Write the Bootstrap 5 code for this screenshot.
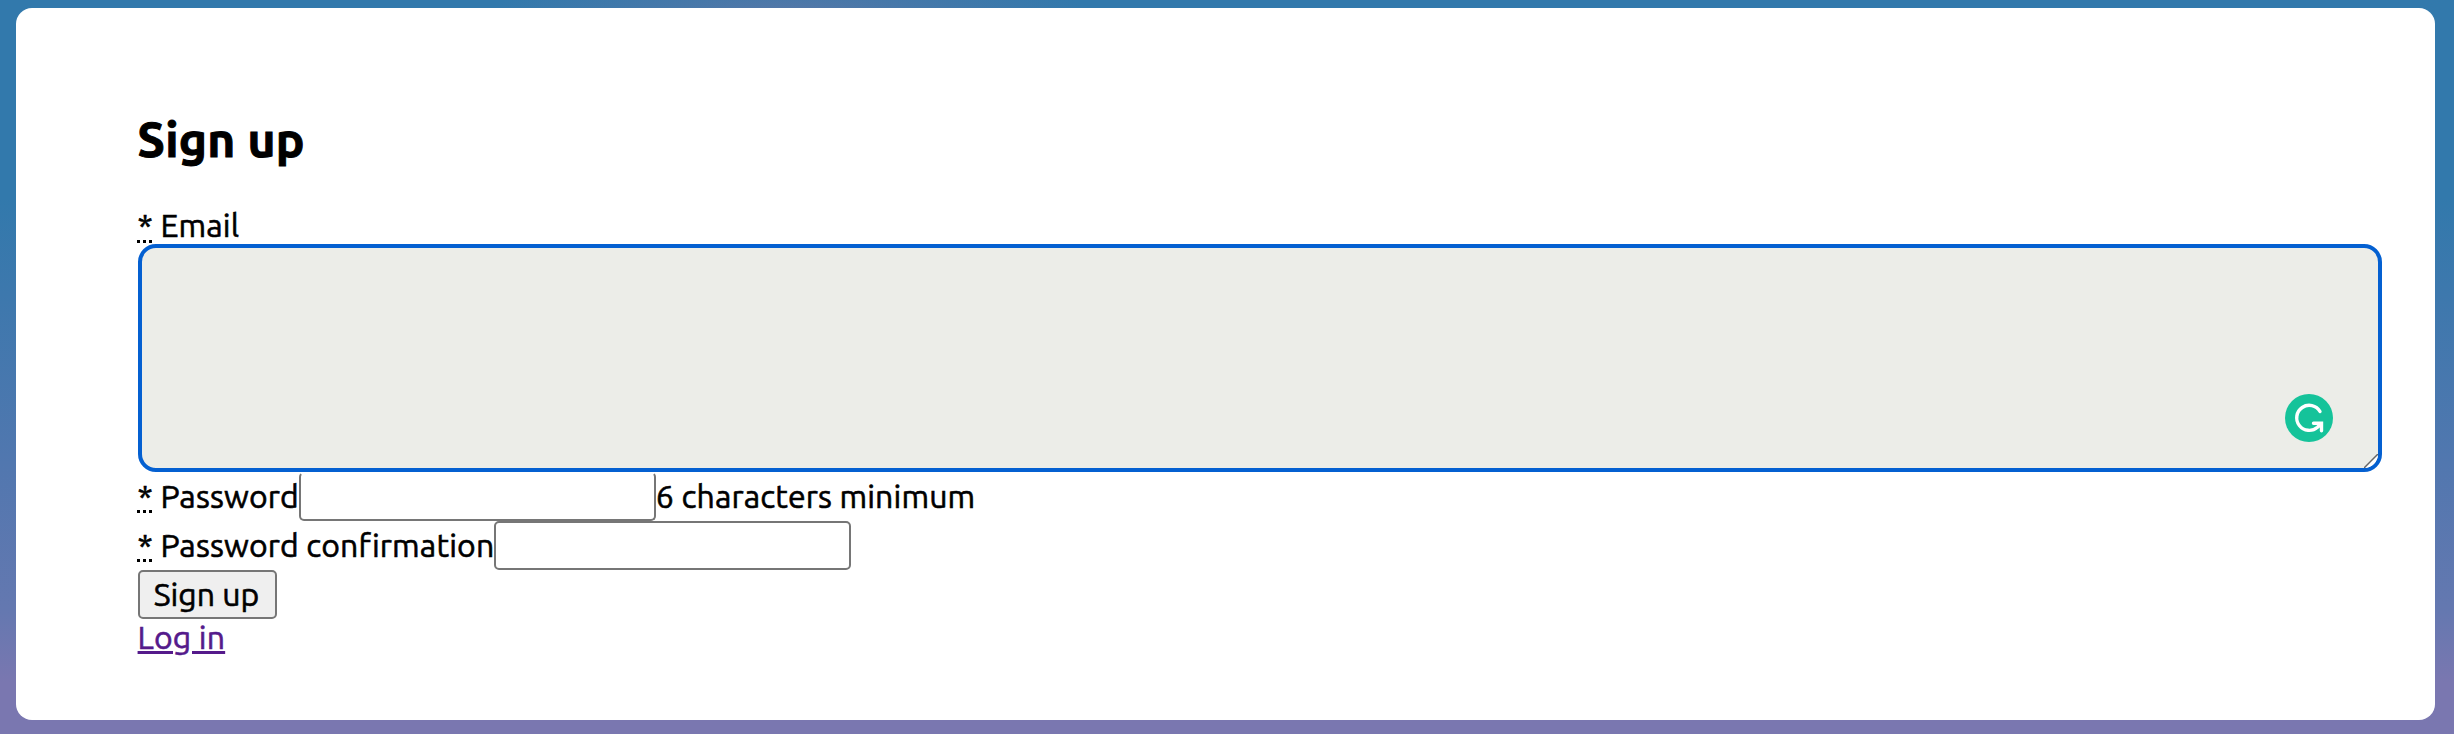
<!DOCTYPE html>
<html lang="en">
<head>
<meta charset="utf-8">
<title>Sign up</title>
<link href="https://cdn.jsdelivr.net/npm/bootstrap@5.3.0/dist/css/bootstrap.min.css" rel="stylesheet">
<style>
body{min-height:734px;padding:8px 18.6px 14px 16.4px;font:32px/37px Ubuntu,"Noto Sans",sans-serif;color:#000;letter-spacing:.13px;-webkit-text-stroke:.6px;background:radial-gradient(ellipse 300px 40px at 790px 12px,#5577a7 0,#5577a700 100%),linear-gradient(#3279ac 0,#3279ac 27%,#3d78ad 40%,#5177af 63%,#6478b0 83%,#7a77b0 93%);overflow:hidden}
.panel{height:712px;border-radius:16px;padding:104px 53px 0 121.2px}
h2{font-size:48px;line-height:55px;font-weight:700;margin:0 0 40px;letter-spacing:.3px;-webkit-text-stroke:1px}
.line{white-space:nowrap}
.fields{height:49px;line-height:48px}
.req{display:inline-block;position:relative}
.req::after{content:"";position:absolute;left:-1px;top:calc(50% + 14px);width:15px;height:3px;background:repeating-linear-gradient(90deg,#000 0 3px,transparent 3px 6px)}
.mail{height:228px;border:4px solid #0460d1;border-radius:18px;background:#ecede8;resize:none;display:block;width:100%;outline:0}
.field{width:357px;height:49px;border:2px solid #767676;border-radius:5px;background:#fff}
.flush{border-top-color:#fff}
.go{width:139px;height:49px;border:2px solid #767676;border-radius:5px;background:#efefef;color:#000;padding:0 1px 1px 0;line-height:44px}
.login{color:#551a8b;text-underline-offset:2px;text-decoration-thickness:3px}
.gram{right:49.500px;bottom:30px}
.grip{right:4px;bottom:4px}
</style>
</head>
<body>
<main class="panel bg-white">
<h2>Sign up</h2>
<form>
<div class="line d-flex"><label for="email"><span class="req">*</span> Email</label></div>
<div class="position-relative">
<textarea class="mail" id="email"></textarea>
<svg class="gram position-absolute" width="48" height="48" viewBox="0 0 48 48"><circle cx="24" cy="24" r="24" fill="#15c39a"/><path d="M35 17.500A12.500 12.500 0 1 0 32.500 33.200L36.500 29.200M28.500 29.200H36.500V36.700" fill="none" stroke="#fff" stroke-width="3.400" stroke-linecap="round"/></svg>
<svg class="grip position-absolute" width="14" height="14" viewBox="0 0 14 14"><path d="M0 14L14 0A14 14 0 0 1 0 14Z" fill="#fff"/><path d="M0 14L14 0" stroke="#666" stroke-width="1.500"/></svg>
</div>
<div class="line fields d-flex"><label for="pass"><span class="req">*</span> Password</label><input class="field flush" id="pass" type="password"><span>6 characters minimum</span></div>
<div class="line fields d-flex"><label for="conf"><span class="req">*</span> Password confirmation</label><input class="field" id="conf" type="password"></div>
<button class="go d-block" type="button">Sign up</button>
</form>
<div><a class="login" href="#">Log in</a></div>
</main>
<script src="https://cdn.jsdelivr.net/npm/bootstrap@5.3.0/dist/js/bootstrap.bundle.min.js"></script>
</body>
</html>
